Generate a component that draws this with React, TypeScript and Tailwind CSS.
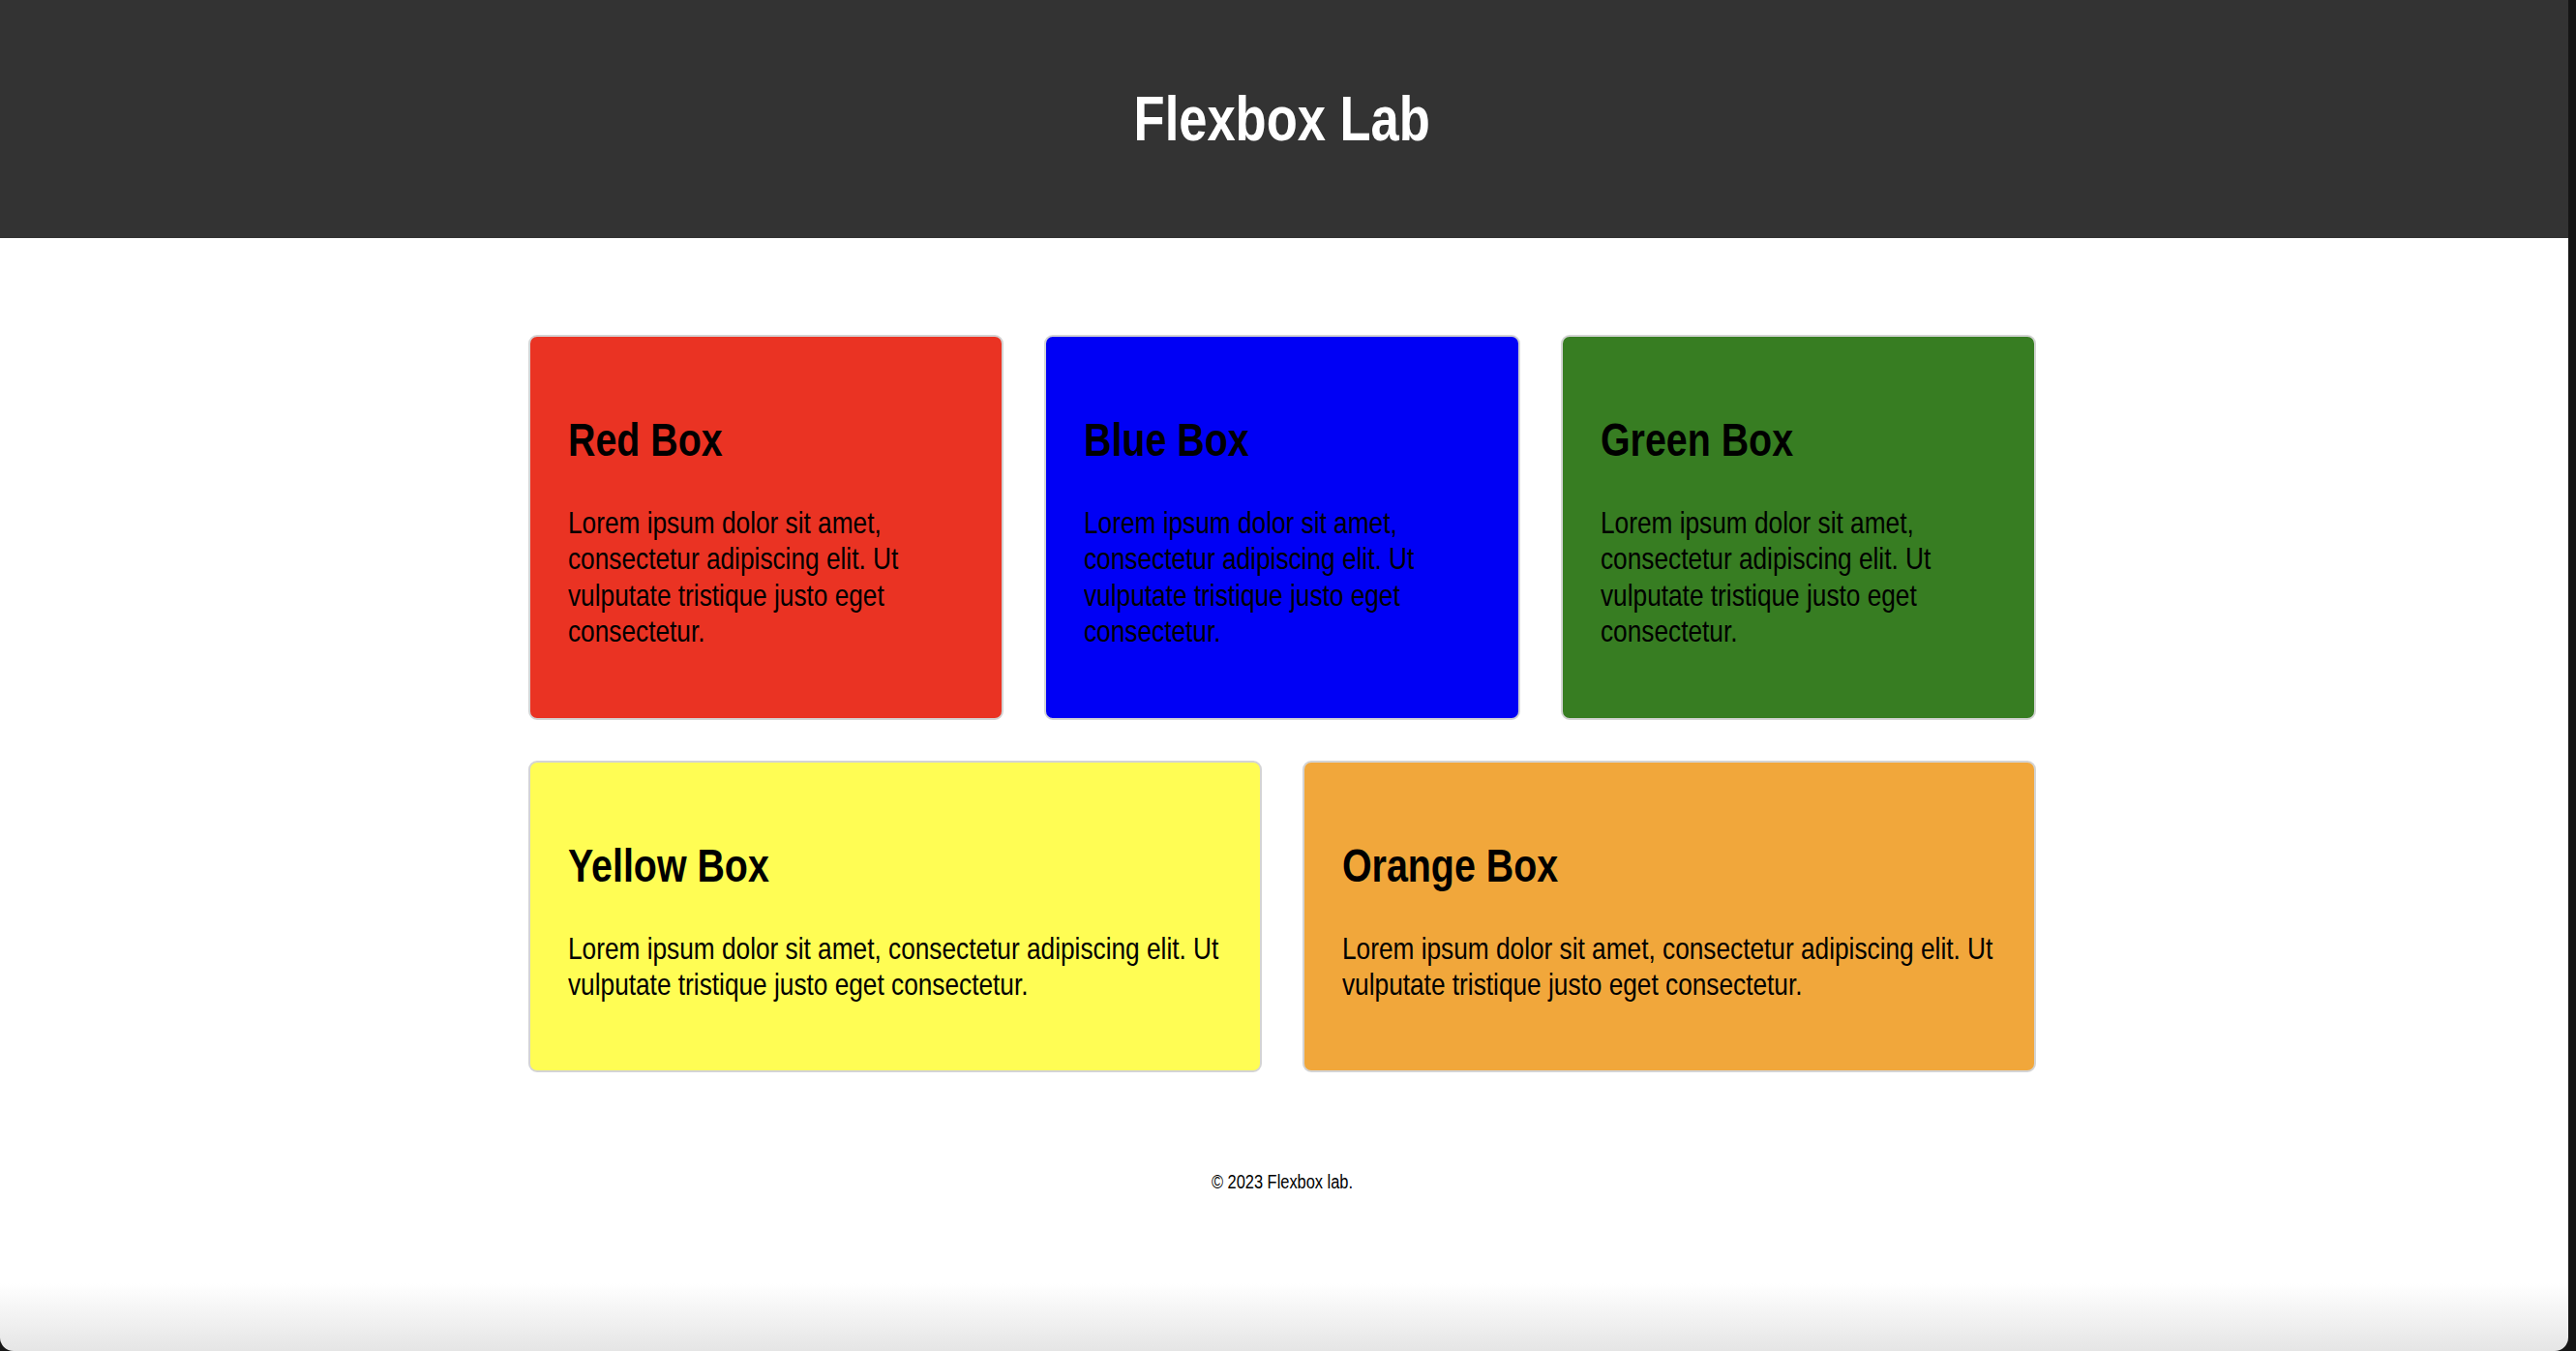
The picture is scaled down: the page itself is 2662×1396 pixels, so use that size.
import type { ReactNode } from "react";

// no narrow face installed, so Liberation Sans is squeezed to Arial Narrow proportions
const font = "font-['Liberation_Sans_Narrow','Arial_Narrow','Liberation_Sans',sans-serif]";

const boxes = [
  { title: "Red Box", bg: "bg-[#ea3323]" },
  { title: "Blue Box", bg: "bg-[#0000f5]" },
  { title: "Green Box", bg: "bg-[#377d22]" },
];

const wide = [
  { title: "Yellow Box", bg: "bg-[#fffd54]" },
  { title: "Orange Box", bg: "bg-[#f1a73b]" },
];

const lorem =
  "Lorem ipsum dolor sit amet, consectetur adipiscing elit. Ut vulputate tristique justo eget consectetur.";

function Narrow({ children, center }: { children: ReactNode; center?: boolean }) {
  return (
    <div
      className={
        center
          ? "scale-x-[0.82] origin-center"
          : "w-[121.9%] scale-x-[0.82] origin-left"
      }
    >
      {children}
    </div>
  );
}

function Box({ title, bg }: { title: string; bg: string }) {
  return (
    <div className={`flex-1 rounded-[9px] border-2 border-[#d4d4d4] px-[39px] pt-[39px] pb-[38px] ${bg}`}>
      <Narrow>
        <h2 className="mt-[40px] mb-[40px] text-[48px] font-bold leading-[55px] text-black">{title}</h2>
        <p className="mb-[32px] text-[32px] leading-[37.4px] text-black">{lorem}</p>
      </Narrow>
    </div>
  );
}

export default function App() {
  return (
    <div className={`flex h-[1396px] w-full bg-[#161616] ${font}`}>
      <div className="flex w-[2654px] overflow-hidden rounded-b-[14px] bg-[linear-gradient(to_bottom,#ffffff_95%,#e5e5e5)]">
        <div className="flex w-[2650px] flex-col">
          <header className="flex h-[246px] items-center justify-center bg-[#333333]">
            <Narrow center>
              <h1 className="text-[64px] font-bold leading-[74px] text-white">Flexbox Lab</h1>
            </Narrow>
          </header>

          <main className="mx-auto mt-[100px] w-[1558px]">
            <div className="flex gap-[42px]">
              {boxes.map((b) => (
                <Box key={b.title} title={b.title} bg={b.bg} />
              ))}
            </div>
            <div className="mt-[42px] flex gap-[42px]">
              {wide.map((b) => (
                <Box key={b.title} title={b.title} bg={b.bg} />
              ))}
            </div>
          </main>

          <footer className="mt-[102px] text-center text-[20px] leading-[23px] text-black">
            <Narrow center>© 2023 Flexbox lab.</Narrow>
          </footer>
        </div>
        <div className="h-[246px] w-[4px] bg-[#333333]" />
      </div>
    </div>
  );
}
